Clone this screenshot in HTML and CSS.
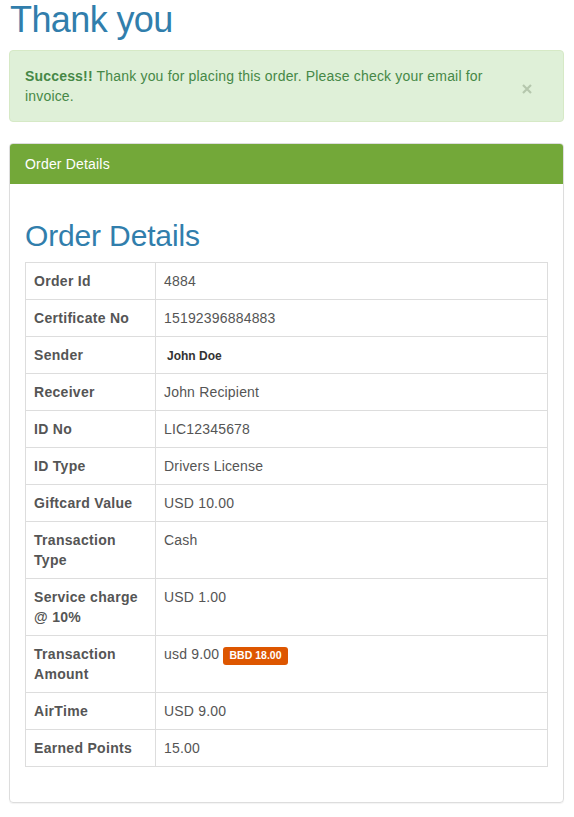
FILE: index.html
```html
<!DOCTYPE html>
<html lang="en">
<head>
  <meta charset="UTF-8">
  <title>Thank you</title>
  <link rel="stylesheet" href="styles.css">
</head>
<body>
  <div class="page">
    <h1 class="page-title">Thank you</h1>

    <div class="alert">
      <button class="close" type="button" aria-label="Close">
        <svg width="10" height="10" viewBox="0 0 10 10">
          <path d="M1 1 L9 9 M9 1 L1 9" stroke="#b5c7ad" stroke-width="2.2" fill="none"/>
        </svg>
      </button>
      <p class="alert-text"><strong>Success!!</strong> Thank you for placing this order. Please check your email for invoice.</p>
    </div>

    <div class="panel">
      <div class="panel-heading">Order Details</div>
      <div class="panel-body">
        <h2 class="section-title">Order Details</h2>
        <table class="details">
          <tr><th>Order Id</th><td>4884</td></tr>
          <tr><th>Certificate No</th><td>15192396884883</td></tr>
          <tr><th>Sender</th><td><span class="sender">John Doe</span></td></tr>
          <tr><th>Receiver</th><td>John Recipient</td></tr>
          <tr><th>ID No</th><td>LIC12345678</td></tr>
          <tr><th>ID Type</th><td>Drivers License</td></tr>
          <tr><th>Giftcard Value</th><td>USD 10.00</td></tr>
          <tr><th>Transaction Type</th><td>Cash</td></tr>
          <tr><th>Service charge @ 10%</th><td>USD 1.00</td></tr>
          <tr><th>Transaction Amount</th><td>usd 9.00 <span class="badge">BBD 18.00</span></td></tr>
          <tr><th>AirTime</th><td>USD 9.00</td></tr>
          <tr><th>Earned Points</th><td>15.00</td></tr>
        </table>
      </div>
    </div>
  </div>
</body>
</html>
```

FILE: styles.css
```css
body {
  margin: 0;
  background: #fff;
  color: #555;
  font-family: "Liberation Sans", Arial, sans-serif;
  font-size: 14px;
  line-height: 20px;
  letter-spacing: 0.18px;
}

.page {
  padding: 0 10px 0 9px;
}

.page-title {
  margin: 0 0 10px 1px;
  font-size: 36px;
  font-weight: normal;
  line-height: 1.1;
  letter-spacing: -0.6px;
  color: #317eac;
}

.alert {
  background: #dff0d8;
  border: 1px solid #d6e9c6;
  border-radius: 4px;
  color: #468847;
  padding: 15px 35px 15px 15px;
  margin-bottom: 21px;
}

.alert-text {
  margin: 0;
}

.alert strong {
  font-weight: bold;
}

.close {
  float: right;
  border: none;
  background: none;
  padding: 0;
  margin: 18px -4px 0 0;
  width: 10px;
  height: 10px;
  cursor: pointer;
}

.close svg {
  display: block;
}

.panel {
  border: 1px solid #ddd;
  border-radius: 4px;
  box-shadow: 0 1px 1px rgba(0,0,0,0.05);
  margin-bottom: 20px;
}

.panel-heading {
  background: #73a839;
  color: #fff;
  padding: 10px 15px;
  border-radius: 3px 3px 0 0;
}

.panel-body {
  padding: 15px;
}

.section-title {
  margin: 20px 0 10px 0;
  font-size: 30px;
  font-weight: normal;
  line-height: 1.1;
  letter-spacing: -0.15px;
  color: #317eac;
}

.details {
  width: 100%;
  border-collapse: collapse;
  margin-bottom: 20px;
}

.details th,
.details td {
  border: 1px solid #ddd;
  padding: 8px;
  text-align: left;
  vertical-align: top;
}

.details th {
  width: 113px;
  font-weight: bold;
  letter-spacing: 0.3px;
}

.sender {
  margin-left: 3px;
  font-size: 12px;
  line-height: 12px;
  font-weight: bold;
  letter-spacing: 0;
  color: #333;
}

.badge {
  display: inline-block;
  background: #dd5600;
  color: #fff;
  font-size: 10.5px;
  font-weight: bold;
  letter-spacing: 0;
  line-height: 13.75px;
  padding: 2px 6.3px 3px;
  border-radius: 3px;
}
```
